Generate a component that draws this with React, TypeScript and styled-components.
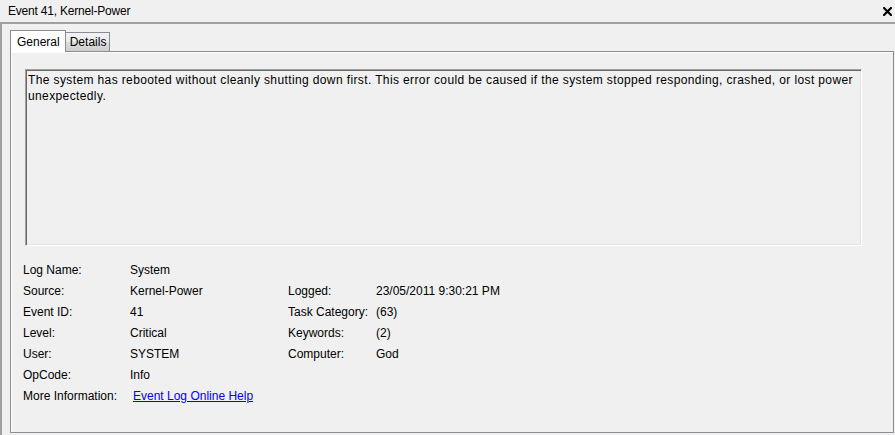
import * as React from 'react'
import styled, { createGlobalStyle } from 'styled-components'

const GlobalStyle = createGlobalStyle`
  html, body {
    margin: 0;
    padding: 0;
    background: #f0f0f0;
  }
  body {
    font-family: 'Liberation Sans', Arial, sans-serif;
    font-size: 12px;
    color: #000;
  }
`

const Window = styled.div`
  width: 895px;
  height: 435px;
  overflow: hidden;
  display: flex;
  flex-direction: column;
  background: #f0f0f0;
`
const TitleBar = styled.div`
  box-sizing: border-box;
  height: 24px;
  flex-shrink: 0;
  border-bottom: 2px solid #a0a0a0;
  display: flex;
  align-items: center;
  justify-content: space-between;
  padding: 0 3px 0 8px;
`
const Title = styled.span`
  line-height: 14px;
  letter-spacing: -0.2px;
`
const CloseButton = styled.span`
  display: flex;
  width: 9px;
  height: 9px;
`
const Body = styled.div`
  flex: 1;
  display: flex;
  flex-direction: column;
  border-left: 2px solid #a0a0a0;
  padding: 6px 1px 2px 8px;
  min-height: 0;
`
const TabStrip = styled.div`
  height: 22px;
  flex-shrink: 0;
  display: flex;
  align-items: flex-end;
  margin-bottom: -1px;
  position: relative;
  z-index: 1;
`
const Tab = styled.div<{ $active?: boolean }>`
  box-sizing: border-box;
  height: ${props => (props.$active ? '22px' : '20px')};
  display: flex;
  align-items: center;
  padding: ${props => (props.$active ? '0 5px 0 6px' : '0 3px 0 4px')};
  border: 1px solid #898c95;
  border-bottom: ${props => (props.$active ? 'none' : '1px solid #898c95')};
  background: ${props =>
    props.$active ? '#ffffff' : 'linear-gradient(#f2f2f2, #ebebeb 50%, #dddddd 51%, #cfcfcf)'};
  margin-left: ${props => (props.$active ? '0' : '-1px')};
  position: relative;
  z-index: ${props => (props.$active ? 2 : 1)};
`
const Panel = styled.div`
  flex: 1;
  display: flex;
  flex-direction: column;
  border: 1px solid #898c95;
  background: #f0f0f0;
  box-shadow: inset 1px 1px #ffffff;
`
const DescBox = styled.div`
  box-sizing: border-box;
  height: 177px;
  margin: 17px 31px 0 14px;
  padding: 2px 1px 2px 2px;
  line-height: 16px;
  letter-spacing: 0.38px;
  border-top: 1px solid #a0a0a0;
  border-left: 1px solid #a0a0a0;
  border-right: 1px solid #ffffff;
  border-bottom: 1px solid #ffffff;
  box-shadow: inset 1px 1px #696969, inset -1px -1px #e3e3e3;
`
const InfoGrid = styled.div`
  display: grid;
  grid-template-columns: 107px 158px 88px 1fr;
  grid-auto-rows: 21px;
  margin: 14px 0 0 12px;
  line-height: 21px;
`
const Cell = styled.span``
const HelpLink = styled.a`
  color: #0000ff;
  text-decoration: underline;
  padding-left: 3px;
  cursor: pointer;
`

const rows: [string, string, string, string][] = [
  ['Log Name:', 'System', '', ''],
  ['Source:', 'Kernel-Power', 'Logged:', '23/05/2011 9:30:21 PM'],
  ['Event ID:', '41', 'Task Category:', '(63)'],
  ['Level:', 'Critical', 'Keywords:', '(2)'],
  ['User:', 'SYSTEM', 'Computer:', 'God'],
  ['OpCode:', 'Info', '', ''],
]

export default function App() {
  return (
    <Window>
      <GlobalStyle />
      <TitleBar>
        <Title>Event 41, Kernel-Power</Title>
        <CloseButton>
          <svg width="9" height="9" viewBox="0 0 9 9">
            <path d="M1 1 L8 8 M8 1 L1 8" stroke="#000" strokeWidth="2.2" strokeLinecap="square" />
          </svg>
        </CloseButton>
      </TitleBar>
      <Body>
        <TabStrip>
          <Tab $active>General</Tab>
          <Tab>Details</Tab>
        </TabStrip>
        <Panel>
          <DescBox>
            The system has rebooted without cleanly shutting down first. This error could be caused if the
            system stopped responding, crashed, or lost power unexpectedly.
          </DescBox>
          <InfoGrid>
            {rows.map(r => (
              <React.Fragment key={r[0]}>
                <Cell>{r[0]}</Cell>
                <Cell>{r[1]}</Cell>
                <Cell>{r[2]}</Cell>
                <Cell>{r[3]}</Cell>
              </React.Fragment>
            ))}
            <Cell>More Information:</Cell>
            <Cell>
              <HelpLink>Event Log Online Help</HelpLink>
            </Cell>
          </InfoGrid>
        </Panel>
      </Body>
    </Window>
  )
}
